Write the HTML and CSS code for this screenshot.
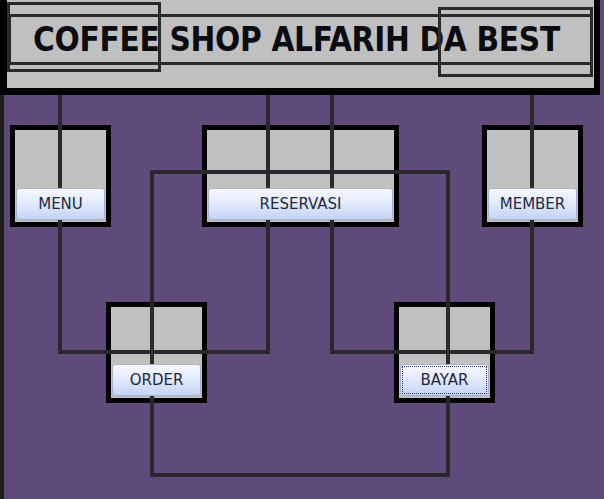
FILE: index.html
```html
<!DOCTYPE html>
<html lang="en">
<head>
    <meta charset="UTF-8">
    <meta name="viewport" content="width=device-width, initial-scale=1.0">
    <title>Coffee Shop Alfarih</title>
    <link rel="stylesheet" href="styles.css">
</head>
<body>
    <div class="header">
        <div class="frame frame-left"></div>
        <div class="frame frame-right"></div>
        <div class="title">COFFEE SHOP ALFARIH DA BEST</div>
    </div>

    <div class="board">
        <div class="node node-wide node-menu">
            <button class="btn">MENU</button>
        </div>
        <div class="node node-reservasi">
            <button class="btn">RESERVASI</button>
        </div>
        <div class="node node-member">
            <button class="btn">MEMBER</button>
        </div>
        <div class="node node-order">
            <button class="btn">ORDER</button>
        </div>
        <div class="node node-bayar">
            <button class="btn btn-focus">BAYAR</button>
        </div>

        <!-- connector lines, page y minus 95 -->
        <svg class="wires" width="604" height="404" viewBox="0 0 604 404">
            <g fill="none" stroke="#2a282e" stroke-width="4">
                <polyline points="60,0 60,257 268,257 268,0" />
                <polyline points="332,0 332,257 532,257 532,0" />
                <rect x="152" y="77" width="296" height="303" />
            </g>
        </svg>
    </div>
</body>
</html>
```

FILE: styles.css
```css
* {
    margin: 0;
    padding: 0;
    box-sizing: border-box;
}

body {
    background: #5f4b79;
    font-family: 'DejaVu Sans', sans-serif;
    width: 604px;
    height: 499px;
    overflow: hidden;
}

.header {
    position: relative;
    width: 600px;
    height: 95px;
    background: #c0c0c0;
    border: 7px solid #000;
    border-top: none;
    border-right-width: 6px;
    padding: 14px 1px 0;
}

.frame {
    position: absolute;
    border: 3px solid #2a2a2a;
    height: 70px;
}

.frame-left {
    left: 0;
    top: 2px;
    width: 154px;
}

.frame-right {
    left: 431px;
    top: 7px;
    width: 155px;
}

.title {
    height: 51px;
    border: 3px solid #2a2a2a;
    padding-left: 22px;
    font-family: 'DejaVu Sans Condensed', 'DejaVu Sans', sans-serif;
    font-weight: 700;
    font-size: 33px;
    line-height: 45px;
    color: #0b0b12;
    letter-spacing: -0.3px;
    white-space: nowrap;
}

.board {
    position: relative;
    z-index: 0;
    height: 404px;
    box-shadow: inset 4px 0 #1f1f1f;
}

.wires {
    position: absolute;
    left: 0;
    top: 0;
    z-index: 1;
}

.node {
    position: absolute;
    top: 30px;
    width: 101px;
    height: 102px;
    background: #c0c0c0;
    border: 5px solid #000;
    display: flex;
    align-items: flex-end;
    padding: 0 1px 2px;
}

.node-menu {
    left: 10px;
}

.node-reservasi {
    left: 202px;
    width: 197px;
}

.node-member {
    left: 482px;
}

.node-order {
    left: 106px;
    top: 207px;
    height: 101px;
}

.node-bayar {
    left: 394px;
    top: 207px;
    height: 101px;
}

.btn {
    position: relative;
    z-index: 2;
    flex: 1;
    height: 32px;
    border: 1px solid #a3b3d3;
    border-radius: 3px;
    background: linear-gradient(180deg, #f6f8fe 0%, #e3eafb 45%, #c5d4f4 100%);
    font-family: 'DejaVu Sans', sans-serif;
    font-size: 15px;
    color: #1d2940;
    cursor: pointer;
}

.btn-focus {
    outline: 1px dotted #2c3550;
    outline-offset: -3px;
}
```
